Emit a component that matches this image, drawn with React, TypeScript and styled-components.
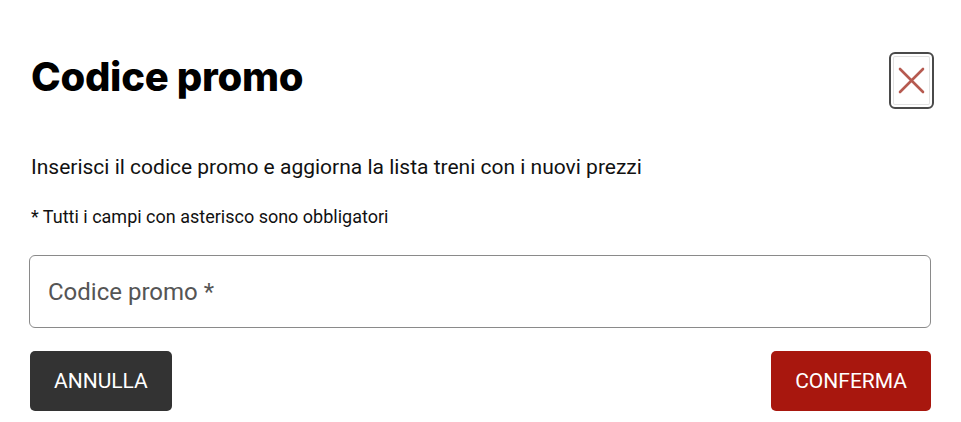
import React from "react";
import styled, { createGlobalStyle } from "styled-components";

const Global = createGlobalStyle`
  html, body { margin: 0; padding: 0; background: #fff; }
  body { font-family: Roboto, "Liberation Sans", sans-serif; color: #111; }
  * { box-sizing: border-box; }
`;

const Dialog = styled.div`
  width: 961px;
  height: 422px;
  padding: 52px 30px 0 30px;
  display: flex;
  flex-direction: column;
`;

const Header = styled.div`
  display: flex;
  align-items: center;
  justify-content: space-between;
  height: 56px;
  margin-right: -3px;
`;

const Title = styled.h2`
  margin: 0 0 6px 1px;
  font-family: Inter, "Liberation Sans", sans-serif;
  font-weight: 800;
  font-size: 40px;
  letter-spacing: -0.3px;
  color: #000;
  line-height: 1;
`;

const CloseButton = styled.button`
  width: 45px;
  height: 57px;
  padding: 0;
  border: 2px solid #4a4a4a;
  border-radius: 6px;
  background: #fff;
  box-shadow: inset 0 0 0 2px #fff, inset 0 0 0 3px #e2e2e2;
  display: flex;
  align-items: center;
  justify-content: center;
  cursor: pointer;
`;

const Text = styled.p<{ $size: number; $lh: number; $mt: number }>`
  margin: ${(p) => p.$mt}px 0 0 1px;
  font-size: ${(p) => p.$size}px;
  line-height: ${(p) => p.$lh}px;
  color: #111;
`;

const Input = styled.input`
  margin-top: 27px;
  width: 902px;
  margin-left: -1px;
  height: 73px;
  border: 1px solid #8a8a8a;
  border-radius: 6px;
  padding: 0 18px;
  font-family: Roboto, "Liberation Sans", sans-serif;
  font-size: 24px;
  color: #222;
  outline: none;
  &::placeholder { color: #555; }
`;

const Actions = styled.div`
  margin-top: 23px;
  display: flex;
  justify-content: space-between;
`;

const Button = styled.button<{ $variant: "dark" | "primary" }>`
  height: 60px;
  padding: 0 24px;
  border: none;
  border-radius: 5px;
  font-family: Roboto, "Liberation Sans", sans-serif;
  font-weight: 400;
  font-size: 21px;
  color: #fff;
  text-transform: uppercase;
  background: ${(p) => (p.$variant === "dark" ? "#333333" : "#a8170e")};
  cursor: pointer;
`;

export default function App() {
  return (
    <>
      <Global />
      <Dialog>
        <Header>
          <Title>Codice promo</Title>
          <CloseButton aria-label="Chiudi">
            <svg width="27" height="27" viewBox="0 0 27 27">
              <path d="M2 2 L25 25 M25 2 L2 25" stroke="#b65a50" strokeWidth="2.6" strokeLinecap="round" />
            </svg>
          </CloseButton>
        </Header>
        <Text $size={21} $lh={28} $mt={45}>
          Inserisci il codice promo e aggiorna la lista treni con i nuovi prezzi
        </Text>
        <Text $size={18} $lh={22} $mt={25}>
          * Tutti i campi con asterisco sono obbligatori
        </Text>
        <Input placeholder="Codice promo *" />
        <Actions>
          <Button $variant="dark">Annulla</Button>
          <Button $variant="primary">Conferma</Button>
        </Actions>
      </Dialog>
    </>
  );
}
